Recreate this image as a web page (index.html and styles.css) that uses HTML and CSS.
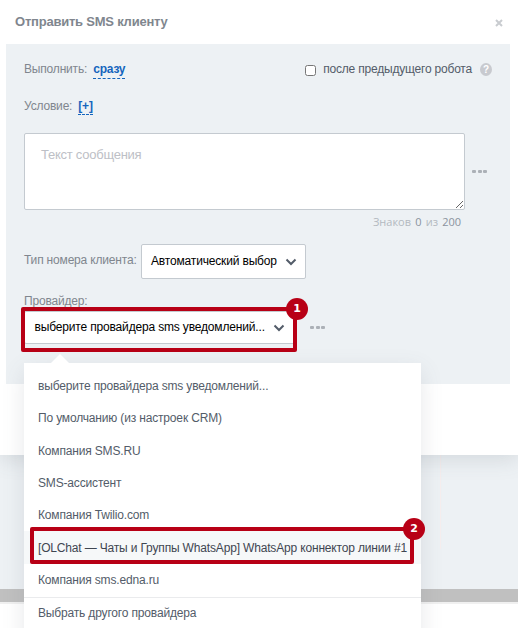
FILE: index.html
```html
<!DOCTYPE html>
<html lang="ru">
<head>
<meta charset="utf-8">
<title>Отправить SMS клиенту</title>
<link rel="stylesheet" href="styles.css">
</head>
<body>
<main class="dialog">
  <header class="head">
    <h1 class="title">Отправить SMS клиенту</h1>
    <svg class="close" width="8" height="8" viewBox="0 0 8 8"><path d="M1 1l6 6M7 1L1 7"/></svg>
  </header>
  <section class="panel">
    <div class="row run">
      <span class="label">Выполнить:</span><a class="link">сразу</a>
      <label class="after"><input class="check" type="checkbox"><span>после предыдущего робота</span><span class="help">?</span></label>
    </div>
    <div class="row cond"><span class="label">Условие:</span><a class="link plus">[+]</a></div>
    <div class="message">
      <textarea class="text" placeholder="Текст сообщения"></textarea>
      <span class="dots"><i></i><i></i><i></i></span>
    </div>
    <div class="counter">Знаков <b>0</b> из <b>200</b></div>
    <div class="row type">
      <span class="label type-label">Тип номера клиента:</span>
      <div class="select"><span>Автоматический выбор</span><svg class="chevron" width="12" height="8" viewBox="0 0 12 8"><path d="M1.5 1.5L6 6l4.5-4.5"/></svg></div>
    </div>
    <div class="label provider-label">Провайдер:</div>
    <div class="provider">
      <div class="select wide"><span>выберите провайдера sms уведомлений...</span><svg class="chevron" width="12" height="8" viewBox="0 0 12 8"><path d="M1.5 1.5L6 6l4.5-4.5"/></svg>
        <div class="mark mark-one"><span class="badge">1</span></div>
      </div>
      <span class="dots"><i></i><i></i><i></i></span>
    </div>
  </section>
</main>
<div class="guide"></div>
<div class="strip"></div>
<nav class="menu">
  <div class="item"><span>выберите провайдера sms уведомлений...</span></div>
  <div class="item"><span>По умолчанию (из настроек CRM)</span></div>
  <div class="item"><span>Компания SMS.RU</span></div>
  <div class="item"><span>SMS-ассистент</span></div>
  <div class="item"><span>Компания Twilio.com</span></div>
  <div class="item active"><span>[OLChat — Чаты и Группы WhatsApp] WhatsApp коннектор линии #1</span><div class="mark mark-two"><span class="badge">2</span></div></div>
  <div class="item"><span>Компания sms.edna.ru</span></div>
  <div class="item other"><span>Выбрать другого провайдера</span></div>
</nav>
</body>
</html>
```
FILE: styles.css
```css
* { box-sizing: border-box; }
html, body { height: 628px; overflow: hidden; }
body {
  margin: 0;
  position: relative;
  display: flex;
  flex-direction: column;
  background: #fff;
  font: 12px/16px "Liberation Sans", Arial, sans-serif;
  letter-spacing: -.165px;
  color: #535c69;
}
span { white-space: nowrap; }
.dialog {
  height: 455px;
  flex: none;
  padding: 0 8px 0 6px;
  background: #fff;
  box-shadow: 0 4px 20px rgba(83, 92, 105, .17);
  position: relative;
}
.head { height: 44px; display: flex; justify-content: space-between; padding: 13px 7px 0 9px; }
.title { margin: 0; font-size: 13px; line-height: 17px; color: #80868e; letter-spacing: -.22px; }
.close { margin-top: 6px; fill: none; stroke: #c9ccd0; stroke-width: 2; }
.panel { height: 340px; padding: 0 18px; background: #edf1f4; }
.row { display: flex; }
.label { color: #80868e; letter-spacing: -.18px; }
.run { height: 54px; padding-top: 17px; }
.link { height: 18px; margin-left: 6px; color: #1565bd; font-weight: bold; letter-spacing: -.2px; border-bottom: 1px dashed #1565bd; }
.plus { height: 17px; }
.after { margin-left: auto; display: flex; height: 16px; letter-spacing: -.2px; }
.check { width: 11px; height: 11px; margin: 4px 7px 0 0; }
.help { width: 12px; height: 13px; margin: 2px 0 0 8px; border-radius: 50%; background: #c8cacf; color: #fff; font: bold 10px/13px "Liberation Sans", sans-serif; letter-spacing: 0; text-align: center; }
.cond { height: 35px; }
.message { display: flex; height: 77px; align-items: center; }
.text {
  display: block;
  width: 441px;
  height: 77px;
  padding: 12px 15px 12px 16px;
  border: 1px solid #c4cad0;
  border-radius: 2px;
  outline: 0;
  background: #fff;
  font: 13px/17px "Liberation Sans", sans-serif;
  letter-spacing: -.25px;
}
.text::placeholder { color: #bdc0c6; opacity: 1; }
.dots { display: flex; gap: 1.5px; margin-left: 7px; }
.dots i { width: 4px; height: 3px; border-radius: 1px; background: #acb1b7; }
.counter { height: 34px; padding: 4px 31px 0 0; text-align: right; font: 11px/16px "Open Sans", sans-serif; letter-spacing: 0; color: #b3b9c0; word-spacing: 1.3px; }
.counter b { font-weight: 400; color: #8a939e; }
.type { height: 48px; }
.type-label { padding-top: 8px; width: 117px; }
.select {
  position: relative;
  display: flex;
  align-items: center;
  justify-content: space-between;
  width: 165px;
  height: 35px;
  padding: 0 8px 1px 9px;
  border: 1px solid #c4cad0;
  border-radius: 2px;
  background: #fff;
  color: #000;
}
.chevron { margin-top: 2px; fill: none; stroke: #535c69; stroke-width: 2; }
.provider-label { height: 19px; padding-top: 1px; }
.provider { display: flex; align-items: center; height: 33px; }
.provider .dots { margin-left: 15px; }
.wide { width: 271px; height: 33px; padding: 0 9px 1px 9.5px; }
.mark { position: absolute; border: 4px solid #b80016; border-radius: 2px; }
.mark-one { left: -4px; top: -5px; width: 276px; height: 45px; }
.mark-two { left: 6px; top: -4px; width: 384px; height: 37px; }
.badge {
  position: absolute;
  right: -15px;
  top: -13px;
  width: 22px;
  height: 22px;
  border-radius: 50%;
  background: #b80016;
  color: #fff;
  font: bold 11px/22px "DejaVu Sans", sans-serif;
  letter-spacing: 0;
  text-align: center;
}
.guide { flex: none; height: 134px; background: linear-gradient(#f6eeee, #f6eeee) 440px 0 / 1px 94px no-repeat #edf1f4; }
.strip { flex: none; height: 15px; background: #c0c0c0; border-bottom: 2px solid #f0f0f0; }
.menu {
  position: absolute;
  left: 24px;
  top: 363px;
  width: 397px;
  height: 290px;
  padding-top: 7px;
  background: #fff;
  box-shadow: 0 7px 21px rgba(83, 92, 105, .14);
}
.menu::before {
  content: "";
  position: absolute;
  left: 27px;
  top: -9px;
  border: solid transparent;
  border-width: 0 9px 9px;
  border-bottom-color: #fff;
}
.item { position: relative; display: flex; align-items: center; height: 32.3px; padding-left: 14px; }
.active { background: #f6f8f9; color: #3f4651; }
.other { height: 31px; margin-top: .9px; border-top: 1px solid #eaebed; }
```
